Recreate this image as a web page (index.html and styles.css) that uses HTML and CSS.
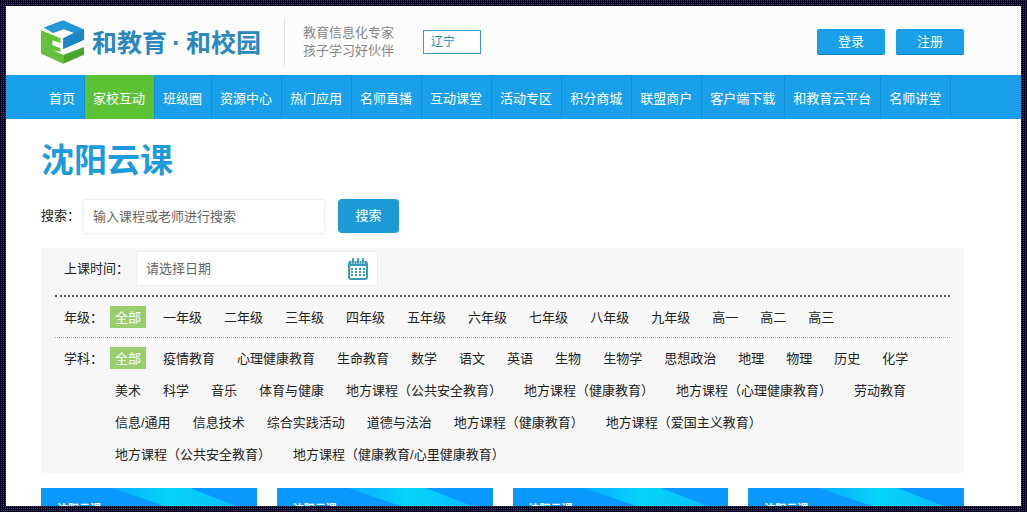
FILE: index.html
```html
<!DOCTYPE html>
<html lang="zh-CN">
<head>
<meta charset="utf-8">
<title>沈阳云课</title>
<link rel="stylesheet" href="styles.css">
</head>
<body>
<div class="page">
  <header class="header">
    <a class="brand" href="#">
      <svg class="brand-mark" viewBox="0 0 128 130" aria-hidden="true">
        <path fill="#2497d8" d="M8 22 66 0 128 28V58L66 86V54L98 38 68 27 36 38Z"/>
        <path fill="#1c86c6" d="M66 54 98 38 128 28V58L66 86Z"/>
        <path fill="#66c03a" d="M0 30 58 54V70L28 60V86L66 104V130L0 99Z"/>
        <path fill="#66c03a" d="M24 56 44 62V74L58 80V94L24 88Z"/>
        <path fill="#fff" d="M34 60 58 68V84L34 74Z"/>
        <path fill="#4aa52c" d="M66 104 128 80V103L66 130Z"/>
      </svg>
      <span class="brand-name">和教育<span class="brand-dot">·</span>和校园</span>
    </a>
    <p class="slogan">教育信息化专家<br>孩子学习好伙伴</p>
    <button class="region" type="button">辽宁</button>
    <div class="account">
      <button class="account-btn" type="button">登录</button>
      <button class="account-btn" type="button">注册</button>
    </div>
  </header>
  <nav class="nav">
    <a href="#">首页</a>
    <a class="active" href="#">家校互动</a>
    <a href="#">班级圈</a>
    <a href="#">资源中心</a>
    <a href="#">热门应用</a>
    <a href="#">名师直播</a>
    <a href="#">互动课堂</a>
    <a href="#">活动专区</a>
    <a href="#">积分商城</a>
    <a href="#">联盟商户</a>
    <a href="#">客户端下载</a>
    <a href="#">和教育云平台</a>
    <a href="#">名师讲堂</a>
  </nav>
  <main class="main">
    <h1 class="title">沈阳云课</h1>
    <form class="search">
      <label for="keyword">搜索：</label>
      <input class="field" id="keyword" type="text" placeholder="输入课程或老师进行搜索">
      <button class="search-btn" type="button">搜索</button>
    </form>
    <section class="filters">
      <div class="row row-date">
        <label for="date">上课时间：</label>
        <div class="date">
          <input class="field" id="date" type="text" placeholder="请选择日期">
          <svg class="calendar" viewBox="0 0 20 22" aria-hidden="true">
            <rect x="1" y="4" width="18" height="17" rx="2" fill="#fff" stroke="#3a9cbc" stroke-width="2"/>
            <path fill="#3a9cbc" d="M1 3H19V8H1Z"/>
            <path stroke="#fff" stroke-width="3" d="M5 1V6M10 1V6M15 1V6"/>
            <path stroke="#3a9cbc" stroke-width="2" stroke-linecap="round" d="M5 1V5M10 1V5M15 1V5"/>
            <path stroke="#3a9cbc" stroke-width="2" stroke-dasharray="2 2" d="M3 11H17M3 14H17M3 17H17"/>
          </svg>
        </div>
      </div>
      <div class="row row-grade">
        <span class="row-name">年级：</span>
        <div class="tags">
          <a class="on" href="#">全部</a>
          <a href="#">一年级</a>
          <a href="#">二年级</a>
          <a href="#">三年级</a>
          <a href="#">四年级</a>
          <a href="#">五年级</a>
          <a href="#">六年级</a>
          <a href="#">七年级</a>
          <a href="#">八年级</a>
          <a href="#">九年级</a>
          <a href="#">高一</a>
          <a href="#">高二</a>
          <a href="#">高三</a>
        </div>
      </div>
      <div class="row row-subject">
        <span class="row-name">学科：</span>
        <div class="tags">
          <a class="on" href="#">全部</a>
          <a href="#">疫情教育</a>
          <a href="#">心理健康教育</a>
          <a href="#">生命教育</a>
          <a href="#">数学</a>
          <a href="#">语文</a>
          <a href="#">英语</a>
          <a href="#">生物</a>
          <a href="#">生物学</a>
          <a href="#">思想政治</a>
          <a href="#">地理</a>
          <a href="#">物理</a>
          <a href="#">历史</a>
          <a href="#">化学</a>
          <a href="#">美术</a>
          <a href="#">科学</a>
          <a href="#">音乐</a>
          <a href="#">体育与健康</a>
          <a href="#">地方课程（公共安全教育）</a>
          <a href="#">地方课程（健康教育）</a>
          <a href="#">地方课程（心理健康教育）</a>
          <a href="#">劳动教育</a>
          <a href="#">信息/通用</a>
          <a href="#">信息技术</a>
          <a href="#">综合实践活动</a>
          <a href="#">道德与法治</a>
          <a href="#">地方课程（健康教育）</a>
          <a href="#">地方课程（爱国主义教育）</a>
          <a href="#">地方课程（公共安全教育）</a>
          <a href="#">地方课程（健康教育/心里健康教育）</a>
        </div>
      </div>
    </section>
    <section class="cards">
      <a class="card" href="#"><span>沈阳云课</span></a>
      <a class="card" href="#"><span>沈阳云课</span></a>
      <a class="card" href="#"><span>沈阳云课</span></a>
      <a class="card" href="#"><span>沈阳云课</span></a>
    </section>
  </main>
</div>
</body>
</html>
```

FILE: styles.css
```css
* {
  box-sizing: border-box;
}

body {
  margin: 0;
  height: 100vh;
  padding: 6px;
  overflow: hidden;
  background: #080022 conic-gradient(#43338c 25%, transparent 0) 0 0 / 2px 2px;
  color: #222;
  font: 13px/22px "Liberation Sans", "Noto Sans CJK SC", sans-serif;
}

a {
  color: inherit;
  text-decoration: none;
}

button,
input {
  font: inherit;
}

.page {
  height: 100%;
  overflow: hidden;
  background: #fff;
}

.header {
  display: flex;
  align-items: center;
  height: 69px;
  padding: 2px 57px 0 35px;
  background: #fcfcfc;
}

.brand {
  display: flex;
  align-items: center;
  gap: 8px;
  padding-right: 23px;
  color: #2b88bd;
}

.brand-mark {
  width: 43px;
  height: 44px;
}

.brand-name {
  display: flex;
  padding-top: 2px;
  font-size: 25px;
  font-weight: 700;
  line-height: 42px;
}

.brand-dot {
  width: 19px;
  text-align: center;
}

.slogan {
  margin: 0;
  padding: 6px 29px 6px 18px;
  border-left: 1px solid #e6e6e6;
  color: #888;
  line-height: 18px;
}

.region {
  width: 58px;
  height: 24px;
  padding: 0 7px;
  border: 1px solid #3a9cc4;
  background: #fff;
  color: #258cb8;
  font-size: 12px;
  line-height: 20px;
  text-align: left;
}

.account {
  display: flex;
  gap: 11px;
  margin-left: auto;
}

.account-btn {
  width: 68px;
  height: 26px;
  padding: 2px 0 0;
  border: 0;
  border-bottom: 1px solid #1580c0;
  border-radius: 2px;
  background: #1aa0e8;
  color: #fff;
}

.nav {
  display: flex;
  padding: 0 57px 0 35px;
  background: #1aa0eb;
  color: #fff;
  line-height: 40px;
}

.nav a {
  padding: 4px 9px 0 8px;
  border-right: 1px solid #168fd6;
}

.nav .active {
  background: #5bc236;
}

.main {
  padding: 20px 57px 0 35px;
}

.title {
  margin: 0;
  color: #1f9bdb;
  font-size: 33px;
  font-weight: 700;
  line-height: 44px;
}

.search {
  display: flex;
  align-items: flex-start;
  margin: 16px 0 14px;
}

.search label {
  width: 42px;
  line-height: 34px;
}

.field {
  width: 242px;
  height: 35px;
  padding: 0 9px;
  border: 1px solid #eee;
  background: #fff;
  color: #666;
}

.field::placeholder {
  color: #666;
  opacity: 1;
}

.search-btn {
  width: 61px;
  height: 34px;
  margin-left: 13px;
  padding: 0;
  border: 0;
  border-radius: 4px;
  background: #1b9ad6;
  color: #fff;
}

.filters {
  padding: 0 14px 8px;
  background: #f7f7f7;
}

.row {
  display: flex;
  padding-left: 9px;
}

.row-date {
  align-items: center;
  padding-top: 3px;
  padding-bottom: 9px;
  border-bottom: 2px dotted #555;
}

.row-date label {
  width: 72px;
}

.date {
  position: relative;
}

.date .field {
  display: block;
}

.calendar {
  position: absolute;
  top: 7px;
  right: 10px;
  width: 20px;
  height: 22px;
}

.row-grade {
  padding-top: 9px;
  padding-bottom: 9px;
  border-bottom: 1px dotted #aaa;
}

.row-subject {
  padding-top: 9px;
}

.row-name {
  flex: 0 0 46px;
  padding-top: 2px;
  line-height: 20px;
}

.tags {
  display: flex;
  flex-wrap: wrap;
  gap: 10px 12px;
  padding-right: 20px;
}

.tags a {
  padding: 2px 5px 0;
  line-height: 20px;
}

.tags .on {
  background: #99ce6d;
  color: #fff;
}

.cards {
  display: grid;
  grid-template-columns: repeat(4, 1fr);
  gap: 20px;
  margin-top: 15px;
}

.card {
  position: relative;
  height: 130px;
  padding: 10px 16px;
  background: #0a9aff;
  color: #fff;
  font-size: 11px;
  font-weight: 700;
}

.card::before {
  content: "";
  position: absolute;
  inset: 0;
  background: linear-gradient(to right, #0aa8ff 30%, #05d4f8 60%, #0ac0fc 85%);
  clip-path: polygon(33% 0, 69% 0, 100% 20%, 100% 38%);
}

.card span {
  position: relative;
}
```
